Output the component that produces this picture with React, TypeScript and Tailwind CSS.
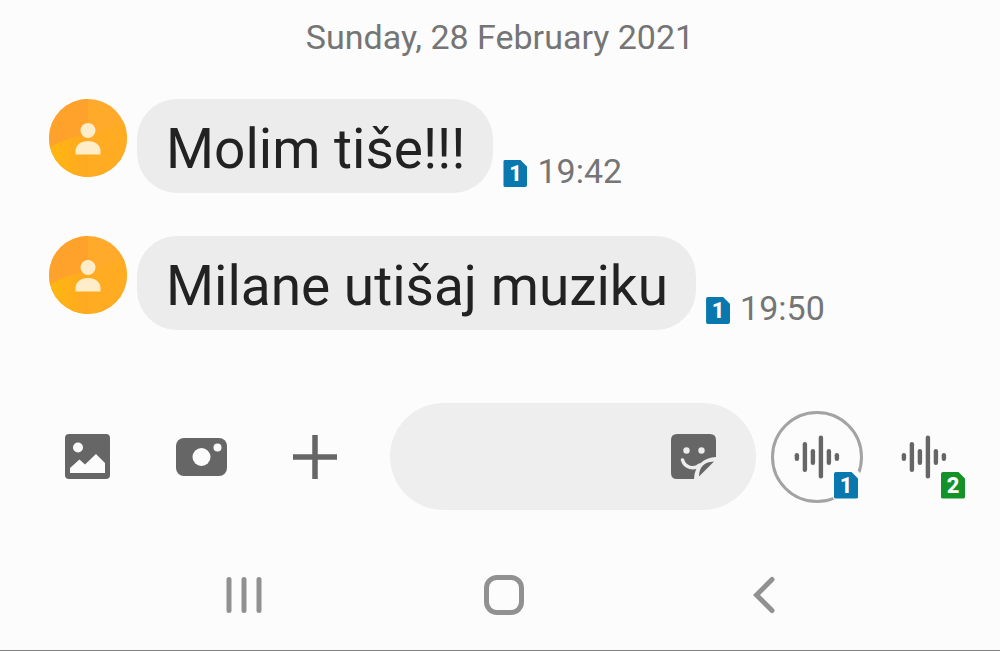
import { useState } from "react";

interface Message {
  id: number;
  text: string;
  time: string;
}

const MESSAGES: Message[] = [
  { id: 1, text: "Molim tiše!!!", time: "19:42" },
  { id: 2, text: "Milane utišaj muziku", time: "19:50" },
];

const WAVE_BARS = [
  { x: 1, h: 8 },
  { x: 9, h: 30 },
  { x: 17, h: 16 },
  { x: 25, h: 43 },
  { x: 33, h: 16 },
  { x: 41, h: 8 },
];

function SimBadge({ slot }: { slot: 1 | 2 }) {
  return (
    <span
      className={`flex h-[27px] w-6 items-center justify-center rounded-[2px] text-[22px] leading-[27px] font-extrabold text-white [clip-path:polygon(0_0,17px_0,100%_7px,100%_100%,0_100%)] ${
        slot === 1 ? "bg-[#0878ae]" : "bg-[#14922a]"
      }`}
    >
      {slot}
    </span>
  );
}

function Avatar() {
  return (
    <svg viewBox="0 0 78 78" className="h-[78px] w-[78px] shrink-0" aria-hidden="true">
      <defs>
        <linearGradient id="avatar-fold" x1="0" y1="0" x2="1" y2="0">
          <stop offset="0" stopColor="#ffb80f" />
          <stop offset="1" stopColor="#ffa822" />
        </linearGradient>
        <clipPath id="avatar-clip">
          <circle cx="39" cy="39" r="39" />
        </clipPath>
      </defs>
      <g clipPath="url(#avatar-clip)">
        <rect width="78" height="78" fill="#ffaa2b" />
        <rect width="39" height="78" fill="#ffa22c" />
        <path d="M0 49 Q18 38 39 36 V78 H0Z" fill="url(#avatar-fold)" />
        <path d="M39 36 Q62 30 78 20 V78 H39Z" fill="#ffac22" />
      </g>
      <circle cx="39" cy="31.500" r="7.5" fill="#ffecc8" />
      <path d="M26.5 55.5 V52 C26.5 46 32 42 39 42 S51.500 46 51.500 52 V55.500Z" fill="#ffecc8" />
    </svg>
  );
}

function GalleryIcon() {
  return (
    <svg viewBox="0 0 45 45" className="h-[45px] w-[45px]" aria-hidden="true">
      <rect width="45" height="45" rx="4" fill="#666" />
      <circle cx="13" cy="13.500" r="5" fill="#fcfcfc" />
      <path d="M5 39V34L14.500 25.500 20 30.500 31 20 40 29V39Z" fill="#fcfcfc" />
    </svg>
  );
}

function CameraIcon() {
  return (
    <svg viewBox="0 0 51 38" className="h-[38px] w-[51px]" aria-hidden="true">
      <rect width="51" height="38" rx="8" fill="#666" />
      <circle cx="25.500" cy="19" r="9" fill="#fcfcfc" />
      <circle cx="41.500" cy="9.500" r="4" fill="#fcfcfc" />
    </svg>
  );
}

function PlusIcon() {
  return (
    <svg viewBox="0 0 44 44" className="h-11 w-11" aria-hidden="true">
      <path d="M22 0V44M0 22H44" stroke="#666" strokeWidth="5.500" />
    </svg>
  );
}

function StickerIcon() {
  return (
    <svg viewBox="0 0 45 45" className="h-[45px] w-[45px]" aria-hidden="true">
      <path d="M6 0H39Q45 0 45 6V23C33 23.500 23.500 31 23 45H6Q0 45 0 39V6Q0 0 6 0Z" fill="#666" />
      <circle cx="15.500" cy="16.500" r="3.200" fill="#ededed" />
      <circle cx="30.500" cy="16.500" r="3.200" fill="#ededed" />
      <path d="M11.500 26C14 34 23 36 28.500 31" fill="none" stroke="#ededed" strokeWidth="3.500" strokeLinecap="round" />
      <path d="M43 27.500L28 42.500C28 34 32 28 43 27.500Z" fill="#666" />
    </svg>
  );
}

function WaveIcon() {
  return (
    <svg viewBox="0 0 46 46" className="h-[46px] w-[46px]" fill="#666" aria-hidden="true">
      {WAVE_BARS.map((bar) => (
        <rect key={bar.x} x={bar.x - 0.3} y={23 - bar.h / 2} width="4.400" height={bar.h} rx="2.200" />
      ))}
    </svg>
  );
}

function MessageRow({ message }: { message: Message }) {
  return (
    <li className="flex items-start">
      <Avatar />
      <p className="ml-[10px] rounded-[40px] bg-[#ececec] pt-[22px] pr-7 pb-4 pl-[29px] text-[55px] leading-[56px] text-[#222]">
        {message.text}
      </p>
      <div className="ml-[10px] flex items-end gap-[10px] self-end pb-[6px]">
        <SimBadge slot={1} />
        <time className="text-[34px] leading-[32px] text-[#757575]">{message.time}</time>
      </div>
    </li>
  );
}

function VoiceButton({ slot, selected }: { slot: 1 | 2; selected: boolean }) {
  return (
    <button
      type="button"
      aria-label={`Voice message, SIM ${slot}`}
      className={`relative flex h-[92px] w-[92px] shrink-0 items-center justify-center rounded-full ${
        selected ? "border-[3px] border-[#a3a3a3]" : "border-[3px] border-transparent"
      }`}
    >
      <WaveIcon />
      <span className="absolute right-0 bottom-0 rounded-[3px] bg-[#fcfcfc] pt-[1px] pr-[2px] pb-[1px] pl-[1px]">
        <SimBadge slot={slot} />
      </span>
    </button>
  );
}

export default function App() {
  const [draft, setDraft] = useState("");

  return (
    <div className="flex min-h-screen flex-col border-b border-[#808080] bg-[#fcfcfc] font-[Roboto,'Noto_Sans',sans-serif]">
      <h1 className="pt-[15px] text-center text-[34px] leading-[44px] font-normal text-[#757575]">
        Sunday, 28 February 2021
      </h1>

      {/* Messages */}
      <ul className="flex grow flex-col gap-[43px] px-[49px] pt-10">
        {MESSAGES.map((message) => (
          <MessageRow key={message.id} message={message} />
        ))}
      </ul>

      {/* Composer */}
      <form
        className="flex items-center gap-[15px] pr-[30px] pl-12"
        onSubmit={(e) => e.preventDefault()}
      >
        <div className="mr-[21px] flex shrink-0 gap-9">
          <button type="button" aria-label="Gallery" className="flex h-[78px] w-[78px] items-center justify-center">
            <GalleryIcon />
          </button>
          <button type="button" aria-label="Camera" className="flex h-[78px] w-[78px] items-center justify-center">
            <CameraIcon />
          </button>
          <button type="button" aria-label="More" className="flex h-[78px] w-[78px] items-center justify-center">
            <PlusIcon />
          </button>
        </div>
        <div className="flex h-[107px] min-w-0 flex-1 items-center rounded-full bg-[#eee] pr-10 pl-10">
          <input
            type="text"
            aria-label="Message"
            value={draft}
            onChange={(e) => setDraft(e.target.value)}
            className="h-full min-w-0 flex-1 bg-transparent text-[34px] text-[#222] outline-none"
          />
          <button type="button" aria-label="Stickers" className="shrink-0">
            <StickerIcon />
          </button>
        </div>
        <VoiceButton slot={1} selected />
        <VoiceButton slot={2} selected={false} />
      </form>

      {/* System navigation */}
      <nav className="mt-[57px] mb-[27px] grid grid-cols-3 pr-[106px] pl-[114px]">
        <button type="button" aria-label="Recent apps" className="flex h-14 items-center justify-center">
          <svg viewBox="0 0 36 38" className="h-[38px] w-9" stroke="#919191" strokeWidth="5" strokeLinecap="round">
            <path d="M3 3.500V34.500M18 3.500V34.500M33 3.500V34.500" />
          </svg>
        </button>
        <button type="button" aria-label="Home" className="flex h-14 items-center justify-center">
          <span className="h-10 w-10 rounded-[13px] border-[5px] border-[#919191]" />
        </button>
        <button type="button" aria-label="Back" className="flex h-14 items-center justify-center">
          <svg viewBox="0 0 22 38" className="h-[38px] w-[22px]" fill="none" stroke="#919191" strokeWidth="5" strokeLinecap="round">
            <path d="M19 3.500L3.500 19 19 34.500" />
          </svg>
        </button>
      </nav>
    </div>
  );
}
